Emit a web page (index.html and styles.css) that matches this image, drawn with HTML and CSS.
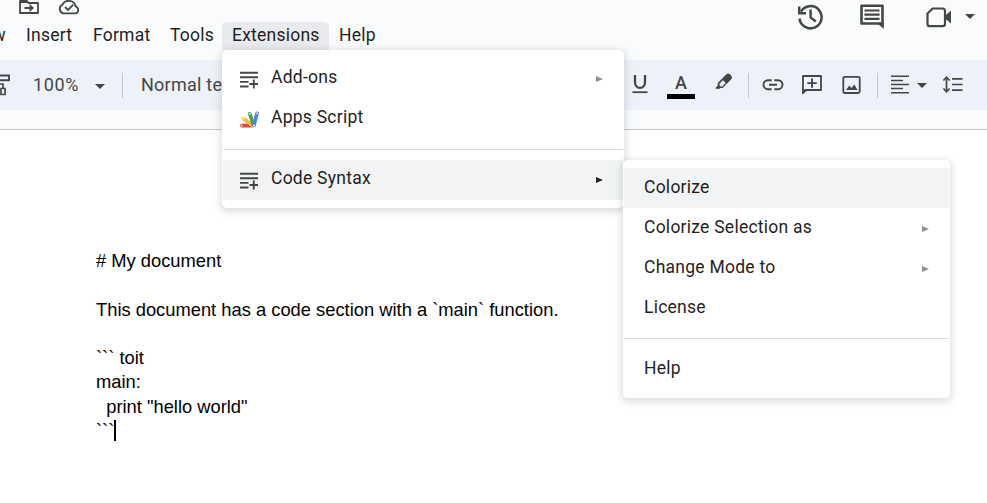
FILE: index.html
```html
<!DOCTYPE html>
<html lang="en">
<head>
<meta charset="utf-8">
<title>Document editor</title>
<link rel="stylesheet" href="styles.css">
</head>
<body>
<svg class="defs" width="0" height="0">
  <symbol id="extension" viewBox="0 0 20 20"><path d="M1 2.7h18M1 7.3h18M1 11.9h8.5M1 16.5h8.5M14.8 9.5v9M10.5 14h8.5" stroke="#444746" stroke-width="1.9" fill="none"/></symbol>
  <symbol id="caret" viewBox="0 0 10 5"><path d="M0 0h10L5 5z" fill="#444746"/></symbol>
</svg>
<header class="header">
  <div class="header-left">
    <div class="title-icons">
      <svg width="22" height="20" viewBox="0 0 22 20"><path d="M2 5.5V13h18V3H10.5L8.500 1H2z" stroke="#444746" stroke-width="1.8" fill="none" stroke-linejoin="round"/><path d="M2 0h7l2 3H2zM6.500 7h5V4l4.500 4-4.500 4V9h-5z" fill="#444746"/></svg>
      <svg width="24" height="20" viewBox="0 0 24 20"><path d="M6 13.300A4.700 4.700 0 0 1 5.500 4.600 7.100 7.100 0 0 1 18.700 6.500 3.600 3.600 0 0 1 19 13.300z" stroke="#444746" stroke-width="1.800" fill="none"/><path d="M8 7l3 3 5.300-5.300" stroke="#444746" stroke-width="1.800" fill="none"/></svg>
    </div>
    <nav class="menubar">
      <span class="menu-name view">View</span>
      <span class="menu-name insert">Insert</span>
      <span class="menu-name format">Format</span>
      <span class="menu-name tools">Tools</span>
      <span class="menu-name extensions">Extensions</span>
      <span class="menu-name">Help</span>
    </nav>
  </div>
  <div class="actions">
    <svg class="history" width="30" height="34" viewBox="0 0 30 34"><path d="M4.500 18.500A11.100 11.100 0 1 0 6 11.500" stroke="#444746" stroke-width="2.500" fill="none"/><path d="M4.200 6.500v6.700H11M15.600 9.500v8l5.200 4" stroke="#444746" stroke-width="2.500" fill="none"/></svg>
    <svg class="comments" width="30" height="34" viewBox="0 0 30 34"><path d="M4.500 5.800h21v17.700h-21z" stroke="#444746" stroke-width="2.600" stroke-linejoin="round" fill="none"/><path d="M20 23h6.800v6z" fill="#444746"/><path d="M7.500 10.500h15M7.500 14.700h15M7.500 18.800h15" stroke="#444746" stroke-width="2.200"/></svg>
    <svg class="video" width="30" height="34" viewBox="0 0 30 34"><path d="M8.700 8.500h9.800q2.500 0 2.500 2.500v13q0 2.200-2.500 2.200H5.700q-2.200 0-2.200-2.200V13.500z" stroke="#444746" stroke-width="2.200" fill="none" stroke-linejoin="round"/><path d="M21 15.800l6-5.200v13l-6-5.200z" fill="#444746"/></svg>
    <svg class="video-caret" width="10" height="5"><use href="#caret"/></svg>
  </div>
</header>
<div class="toolbar">
  <svg class="roller" width="12" height="26" viewBox="0 0 12 26"><path d="M0 3.500h9v4.700H0" stroke="#444746" stroke-width="1.900" fill="none"/><path d="M0 12h3v5M1 16.500h4v6H1z" stroke="#444746" stroke-width="1.700" fill="none"/></svg>
  <span class="zoom-level">100%</span>
  <svg class="zoom-caret" width="10" height="5"><use href="#caret"/></svg>
  <i class="separator"></i>
  <span class="paragraph-style">Normal text</span>
  <svg class="tool underline" width="30" height="30" viewBox="0 0 30 30"><path d="M10 5v7.500a5 5.300 0 0 0 10 0V5" stroke="#444746" stroke-width="2.300" fill="none"/><path d="M7.500 22.200h15" stroke="#444746" stroke-width="1.800"/></svg>
  <span class="tool text-color"><span>A</span></span>
  <svg class="tool highlighter" width="30" height="30" viewBox="0 0 30 30"><path d="M7 18.500l2.700-3v-2.400l8.700-8.800q1.700-1.700 3.500 0l1.400 1.500q1.700 1.700 0 3.400l-8.700 8.700-2.500.1-.9.900z" fill="#444746"/><path d="M11.500 13.700l3.400-3.500 2.800 2.800-3.500 3.500h-1.400l-1.300-1.300z" fill="#edf2fa"/></svg>
  <i class="separator"></i>
  <svg class="tool link" width="30" height="30" viewBox="0 0 30 30"><path d="M13.700 10.200H10a4.500 4.500 0 0 0 0 9h3.700M16.300 10.200H20a4.500 4.500 0 0 1 0 9h-3.700M11 14.700h8" stroke="#444746" stroke-width="1.900" fill="none"/></svg>
  <svg class="tool add-comment" width="30" height="30" viewBox="0 0 30 30"><path d="M6 23V6h18v14H9z" stroke="#444746" stroke-width="1.800" fill="none" stroke-linejoin="round"/><path d="M5.200 19.500h5L5.200 24.500zM14.100 8.500h1.900v3.700h3.800V14H16v3.700h-1.900V14h-3.800v-1.800h3.800z" fill="#444746"/></svg>
  <svg class="tool image" width="30" height="30" viewBox="0 0 30 30"><rect x="6.300" y="6.800" width="16.400" height="16.200" rx="1.500" stroke="#444746" stroke-width="1.800" fill="none"/><path d="M9 20l3.300-4.500 2.200 2.500 2.800-3.500L20.500 20z" fill="#444746"/></svg>
  <i class="separator"></i>
  <svg class="tool align" width="30" height="30" viewBox="0 0 30 30"><path d="M6 6.300h18M6 10.500h12M6 14.500h18M6 18.500h12M6 22.700h18" stroke="#444746" stroke-width="1.600"/></svg>
  <svg class="align-caret" width="10" height="5"><use href="#caret"/></svg>
  <svg class="tool spacing" width="30" height="30" viewBox="0 0 30 30"><path d="M14 8.800h10.500M14 14.500h10.500M14 20.200h10.500M8.500 8.500v12" stroke="#444746" stroke-width="1.700" fill="none"/><path d="M5.400 10.500l3.100-3.300 3.100 3.300M5.400 18.500l3.100 3.300 3.100-3.300" stroke="#444746" stroke-width="1.700" fill="none"/></svg>
</div>
<main class="document">
  <p># My document</p>
  <p>&nbsp;</p>
  <p>This document has a code section with a `main` function.</p>
  <p>&nbsp;</p>
  <p>``` toit</p>
  <p>main:</p>
  <p>&nbsp; print "hello world"</p>
  <p>```<i class="cursor"></i></p>
</main>

<div class="menu extensions-menu">
  <div class="menu-item"><svg class="item-icon" width="20" height="20"><use href="#extension"/></svg><span>Add-ons</span><i class="arrow"></i></div>
  <div class="menu-item"><svg class="item-icon" width="20" height="20" viewBox="0 0 20 20"><g fill="none" stroke-linecap="round" stroke-width="3.600"><path d="M2.600 15.600H13" stroke="#dc4d3c"/><path d="M4.500 8.500l9 7" stroke="#f3bd42"/><path d="M10.800 3.800L14.200 14.500" stroke="#4d9e57"/><path d="M18 3.300L15 15.200" stroke="#4d82e8"/></g><g fill="#fff"><circle cx="2.600" cy="15.600" r=".9"/><circle cx="4.500" cy="8.500" r=".9"/><circle cx="10.800" cy="3.800" r=".9"/><circle cx="18" cy="3.300" r=".9"/><circle cx="14.900" cy="15.400" r=".9"/></g></svg><span>Apps Script</span></div>
  <div class="divider"></div>
  <div class="menu-item active"><svg class="item-icon" width="20" height="20"><use href="#extension"/></svg><span>Code Syntax</span><i class="arrow"></i></div>
</div>
<div class="menu submenu">
  <div class="menu-item active"><span>Colorize</span></div>
  <div class="menu-item"><span>Colorize Selection as</span><i class="arrow"></i></div>
  <div class="menu-item"><span>Change Mode to</span><i class="arrow"></i></div>
  <div class="menu-item"><span>License</span></div>
  <div class="divider"></div>
  <div class="menu-item"><span>Help</span></div>
</div>
</body>
</html>
```
FILE: styles.css
```css
* { box-sizing: border-box; }
body {
  margin: 0;
  height: 503px;
  overflow: hidden;
  position: relative;
  background: #f9fbfd;
  font-family: Roboto, "Liberation Sans", sans-serif;
  font-size: 17.5px;
  color: #1f1f1f;
}
svg { display: block; flex: none; }
.defs { position: absolute; }
.header { display: flex; justify-content: space-between; height: 60px; }
.title-icons { display: flex; gap: 17px; height: 22px; padding-left: 18px; }
.menubar { display: flex; height: 28px; line-height: 26px; letter-spacing: .23px; }
.menu-name { padding-left: 10px; white-space: nowrap; }
.view { width: 16px; display: flex; justify-content: flex-end; padding: 0 10px 0 0; }
.insert { width: 67px; }
.format { width: 77px; }
.tools { width: 62px; }
.extensions { width: 107px; background: #e8eaed; border-radius: 5px 5px 0 0; }
.actions { display: flex; align-items: flex-start; padding-right: 12px; }
.comments { margin-left: 32px; }
.video { margin-left: 37px; }
.video-caret { margin: 14px 0 0 11px; }
.toolbar {
  display: flex;
  align-items: center;
  height: 50px;
  background: #edf2fa;
  color: #444746;
  font-size: 18px;
}
.zoom-level { width: 62px; margin-left: 21px; padding-bottom: 1px; letter-spacing: .6px; }
.zoom-caret { margin: 3px 17px 0 0; }
.separator { flex: none; width: 1px; height: 25px; background: #c7c7c7; }
.paragraph-style { width: 484px; margin-left: 18px; padding-bottom: 2px; white-space: nowrap; letter-spacing: .25px; }
.tool { flex: none; width: 30px; height: 30px; }
.text-color {
  width: 28px;
  height: 27px;
  margin: 0 0 0 12px;
  border-bottom: 5px solid #000;
  text-align: center;
  line-height: 22px;
  font-weight: 500;
  font-size: 18px;
}
.highlighter { margin: 0 10px 0 13px; }
.link { margin-left: 9px; }
.add-comment { margin-left: 9px; }
.image { margin: 0 10px; }
.align { margin-left: 7px; }
.align-caret { margin-left: 2px; }
.spacing { margin-left: 11px; }
.document {
  height: 374px;
  margin-top: 19px;
  padding: 119px 96px 0;
  border-top: 1px solid #c7c7c7;
  background: #fff;
  color: #000;
  font: 18.33px/24.29px "Liberation Sans", Arial, sans-serif;
}
.document p { margin: 0; white-space: nowrap; }
.cursor { display: inline-block; width: 2px; height: 21px; margin: -5px 0; background: #000; vertical-align: 1px; }
.menu {
  position: absolute;
  background: #fff;
  border-radius: 5px;
  box-shadow: 0 2px 7px 2px rgba(60, 64, 67, .17);
  letter-spacing: .25px;
}
.menu-item { display: flex; align-items: center; height: 40px; padding: 0 20px 4px 16px; margin: 0 1px; }
.menu-item.active { background: #f1f3f4; }
.item-icon { margin: 5px 12px 0 0; }
.arrow { margin: 4px 0 0 auto; border: solid transparent; border-width: 3.500px 0 3.500px 7px; border-left-color: #8f8f8f; }
.active .arrow { border-left-color: #222; }
.divider { height: 1px; margin: 10px 1px; background: #dadce0; }
.extensions-menu { left: 222px; top: 50px; width: 402px; height: 158px; padding-top: 9px; }
.submenu { left: 623px; top: 160px; width: 327px; height: 238px; padding-top: 8px; }
.submenu .menu-item { padding: 0 20px 2px; }
```
